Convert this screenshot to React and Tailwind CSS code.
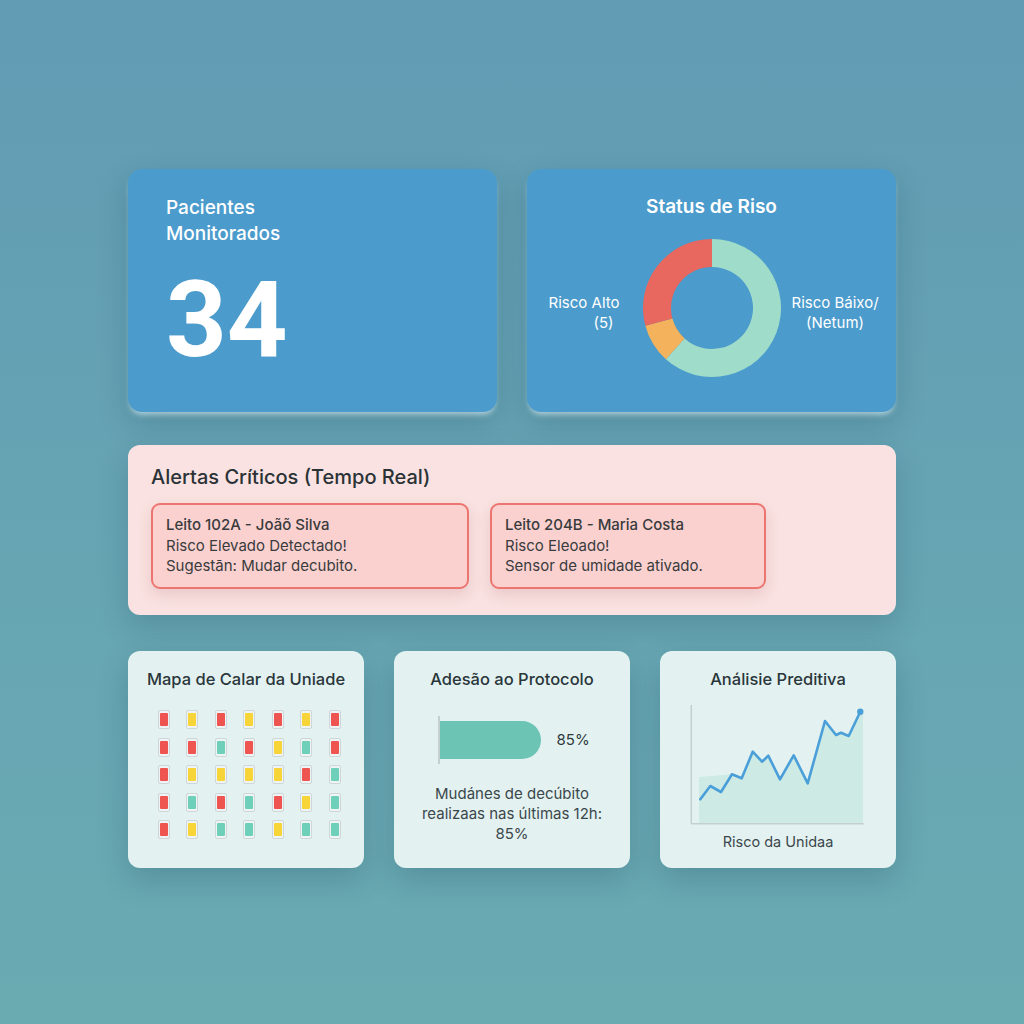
import React from 'react'

const R = 'bg-[#ef5550]'
const Y = 'bg-[#f7d437]'
const G = 'bg-[#6fd0b9]'

const heatRows = [
  [R, Y, R, Y, R, Y, R],
  [R, R, G, R, Y, G, R],
  [R, Y, Y, Y, Y, R, G],
  [R, G, R, G, R, Y, G],
  [R, Y, G, G, Y, G, G],
]

const linePts = [
  [14.3, 98.3], [24.3, 85], [35, 91], [46, 73.3], [55.7, 77.3], [66.7, 50.7],
  [76, 60.7], [82.3, 54.7], [94, 78.3], [107.7, 54.3], [121.7, 82.3], [139, 20],
  [150, 34], [155, 31.7], [162.7, 35], [174.3, 10.7],
]

function polar(cx, cy, r, deg) {
  const a = ((deg - 90) * Math.PI) / 180
  return [cx + r * Math.cos(a), cy + r * Math.sin(a)]
}

function arc(cx, cy, ro, ri, from, to) {
  const large = to - from > 180 ? 1 : 0
  const [x1, y1] = polar(cx, cy, ro, from)
  const [x2, y2] = polar(cx, cy, ro, to)
  const [x3, y3] = polar(cx, cy, ri, to)
  const [x4, y4] = polar(cx, cy, ri, from)
  return `M${x1} ${y1} A${ro} ${ro} 0 ${large} 1 ${x2} ${y2} L${x3} ${y3} A${ri} ${ri} 0 ${large} 0 ${x4} ${y4} Z`
}

function Donut() {
  return (
    <svg width="140" height="140" viewBox="0 0 140 140">
      <path d={arc(70, 70, 69, 41, 0, 222)} fill="#9fdcc9" />
      <path d={arc(70, 70, 69, 41, 222, 255)} fill="#f4b25c" />
      <path d={arc(70, 70, 69, 41, 255, 360)} fill="#e8675e" />
    </svg>
  )
}

function TrendChart() {
  const line = linePts.map((p) => p.join(',')).join(' ')
  const area = [[13, 76], ...linePts.slice(3), [177, 10.7], [177, 122.7], [13, 122.7]]
    .map((p) => p.join(','))
    .join(' ')
  return (
    <svg width="185" height="126" viewBox="0 0 185 126">
      <polygon points={area} fill="#cdeae5" />
      <line x1="5.3" y1="4" x2="5.3" y2="122.7" stroke="#c5cfd0" strokeWidth="1.5" />
      <line x1="5.3" y1="122.7" x2="177.7" y2="122.7" stroke="#c5cfd0" strokeWidth="1.5" />
      <polyline points={line} fill="none" stroke="#4a9fd9" strokeWidth="2.6" strokeLinejoin="round" strokeLinecap="round" />
      <circle cx="174.3" cy="10.7" r="3.2" fill="#4a9fd9" />
    </svg>
  )
}

function Alert({ title, lines, w }) {
  return (
    <div className={`${w} rounded-[9px] border-2 border-[#ec7570] bg-[#fbd1cf] pl-[13px] pt-[10px] pb-[10px] text-[15px] leading-[20.5px] text-[#393b3d] shadow-[0_6px_14px_rgba(160,90,90,0.18)]`}>
      <p className="font-medium">{title}</p>
      {lines.map((l) => (
        <p key={l}>{l}</p>
      ))}
    </div>
  )
}

const topCard =
  'h-[243px] w-[369px] rounded-[14px] bg-[#4b9bcc] text-white shadow-[0_12px_30px_rgba(20,60,80,0.22),0_5px_6px_-3px_rgba(225,248,255,0.95)]'
const bottomCard =
  'flex h-[217px] w-[236px] flex-col items-center rounded-[12px] bg-[#e3f2f0] pt-[17px] shadow-[0_12px_30px_rgba(20,60,80,0.22)]'

export default function App() {
  return (
    <div
      className="min-h-[1024px] w-full bg-gradient-to-b from-[#619bb4] via-[#66a4b3] to-[#6aabb2] pt-[169px]"
      style={{ fontFamily: 'Inter, "Noto Sans", sans-serif' }}
    >
      <div className="mx-auto flex w-[768px] flex-col">
        {/* top row */}
        <div className="flex gap-[30px]">
          <div className={`${topCard} pl-[38px] pt-[26px]`}>
            <p className="text-[19px] font-medium leading-[26px]">
              Pacientes
              <br />
              Monitorados
            </p>
            <p
              className="mt-[20px] text-[106px] font-bold leading-none"
              style={{ fontFamily: 'Roboto, sans-serif' }}
            >
              34
            </p>
          </div>
          <div className={`${topCard} flex flex-col items-center pt-[25px]`}>
            <p className="text-[19px] font-semibold leading-[26px]">Status de Riso</p>
            <div className="mt-[18px] flex items-center">
              <div className="w-[117px] pr-[22px] pt-[10px] text-right text-[15px] leading-[20px]">
                <p>Risco Alto</p>
                <p className="pr-[6px]">(5)</p>
              </div>
              <Donut />
              <div className="w-[117px] pl-[10px] pt-[10px] text-[15px] leading-[20px]">
                <div className="inline-block text-center">
                  <p>Risco Báixo/</p>
                  <p>(Netum)</p>
                </div>
              </div>
            </div>
          </div>
        </div>

        {/* alerts */}
        <div className="mt-[33px] h-[170px] rounded-[12px] bg-[#f9e2e1] pl-[23px] pt-[18px] shadow-[0_12px_30px_rgba(20,60,80,0.2)]">
          <p className="text-[20px] font-medium leading-[28px] text-[#2b3236]">Alertas Críticos (Tempo Real)</p>
          <div className="mt-[12px] flex gap-[21px]">
            <Alert
              w="w-[318px]"
              title="Leito 102A - Joãõ Silva"
              lines={['Risco Elevado Detectado!', 'Sugestān: Mudar decubito.']}
            />
            <Alert
              w="w-[276px]"
              title="Leito 204B - Maria Costa"
              lines={['Risco Eleoado!', 'Sensor de umidade ativado.']}
            />
          </div>
        </div>

        {/* bottom row */}
        <div className="mt-[36px] flex gap-[30px]">
          <div className={bottomCard}>
            <p className="text-[16.5px] font-medium leading-[22px] text-[#2a363b]">Mapa de Calar da Uniade</p>
            <div className="mt-[20px] ml-[6px] flex flex-col gap-[8.5px]">
              {heatRows.map((row, i) => (
                <div key={i} className="flex gap-[16.5px]">
                  {row.map((c, j) => (
                    <div key={j} className="h-[19px] w-[12px] rounded-[2px] border border-[#cfd6d7] bg-[#eef3f3] px-[1px] py-[2px]">
                      <div className={`h-full w-full rounded-[1px] ${c}`} />
                    </div>
                  ))}
                </div>
              ))}
            </div>
          </div>

          <div className={bottomCard}>
            <p className="text-[16.5px] font-medium leading-[22px] text-[#2a363b]">Adesão ao Protocolo</p>
            <div className="mt-[26px] flex h-[48px] w-full items-center pl-[44px]">
              <div className="h-full w-[1.5px] bg-[#c5cfd0]" />
              <div className="h-[38px] w-[101px] rounded-r-[19px] bg-[#6cc4b5]" />
              <span className="ml-[16px] text-[15px] text-[#2f3a3f]">85%</span>
            </div>
            <p className="mt-[20px] text-center text-[15px] leading-[20px] text-[#3b474c]">
              Mudánes de decúbito
              <br />
              realizaas nas últimas 12h:
              <br />
              85%
            </p>
          </div>

          <div className={bottomCard}>
            <p className="text-[16.5px] font-medium leading-[22px] text-[#2a363b]">Análisie Preditiva</p>
            <div className="mt-[11px] self-start pl-[26px]">
              <TrendChart />
            </div>
            <p className="mt-[5px] text-[14.5px] leading-[20px] text-[#3b474c]">Risco da Unidaa</p>
          </div>
        </div>
      </div>
    </div>
  )
}
